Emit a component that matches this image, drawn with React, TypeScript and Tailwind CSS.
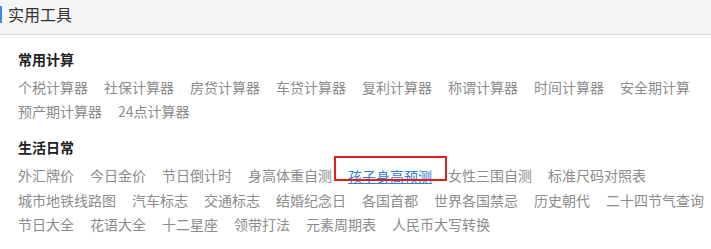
const groups = [
  {
    title: "常用计算",
    items: [
      "个税计算器",
      "社保计算器",
      "房贷计算器",
      "车贷计算器",
      "复利计算器",
      "称谓计算器",
      "时间计算器",
      "安全期计算",
      "预产期计算器",
      "24点计算器",
    ],
  },
  {
    title: "生活日常",
    items: [
      "外汇牌价",
      "今日金价",
      "节日倒计时",
      "身高体重自测",
      "孩子身高预测",
      "女性三围自测",
      "标准尺码对照表",
      "城市地铁线路图",
      "汽车标志",
      "交通标志",
      "结婚纪念日",
      "各国首都",
      "世界各国禁忌",
      "历史朝代",
      "二十四节气查询",
      "节日大全",
      "花语大全",
      "十二星座",
      "领带打法",
      "元素周期表",
      "人民币大写转换",
    ],
  },
];

const highlighted = "孩子身高预测";

export default function App() {
  return (
    <div
      className="w-[711px] h-[249px] bg-white overflow-hidden"
      style={{ fontFamily: '"Noto Sans CJK SC", "Noto Sans", sans-serif' }}
    >
      {/* Header */}
      <div className="h-[35px] bg-[#f5f5f5] border-b border-[#dcdcdc] flex">
        <div className="w-[2px] h-[17px] mt-[6px] bg-[#3d8be0]" />
        <span className="ml-[6px] mt-[3px] text-[16px] leading-[22px] text-[#333]">
          实用工具
        </span>
      </div>

      <div className="pl-[18px] pt-[12px]">
        {groups.map((g, gi) => (
          <div key={g.title} className={gi > 0 ? "mt-[12px]" : ""}>
            <h3 className="text-[14px] leading-[24px] font-bold text-[#222] mb-[4px]">
              {g.title}
            </h3>
            <div className="flex flex-wrap gap-x-4">
              {g.items.map((item) =>
                item === highlighted ? (
                  <span key={item} className="relative">
                    <a className="text-[14px] leading-[24px] text-[#2f80d8] underline underline-offset-1 cursor-pointer">
                      {item}
                    </a>
                    <span className="absolute -left-[14px] -top-[7px] w-[113px] h-[25px] border-[2.5px] border-[#e01e1e]" />
                  </span>
                ) : (
                  <span key={item} className="text-[14px] leading-[24px] text-[#8c8c8c]">
                    {item}
                  </span>
                )
              )}
            </div>
          </div>
        ))}
      </div>
    </div>
  );
}
